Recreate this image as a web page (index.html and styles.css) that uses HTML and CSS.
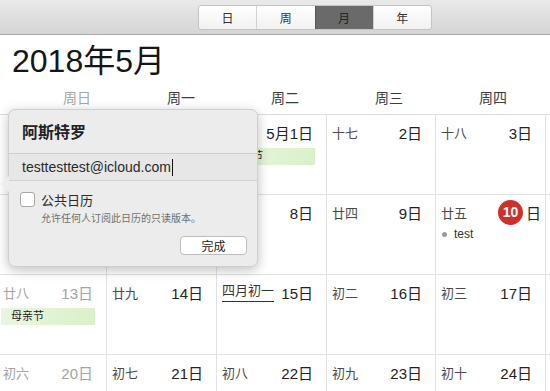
FILE: index.html
```html
<!DOCTYPE html>
<html lang="zh-CN">
<head>
    <meta charset="UTF-8">
    <title>日历</title>
    <link rel="stylesheet" href="styles.css">
</head>
<body>
    <div class="app">
        <div class="toolbar">
            <div class="segmented">
                <span class="seg">日</span>
                <span class="seg">周</span>
                <span class="seg active">月</span>
                <span class="seg">年</span>
            </div>
        </div>

        <h1 class="title">2018年5月</h1>

        <div class="weekdays">
            <span class="weekend">周日</span>
            <span>周一</span>
            <span>周二</span>
            <span>周三</span>
            <span>周四</span>
        </div>

        <div class="month">
            <!-- week 1 (first two days sit under the popover) -->
            <div class="cell weekend"></div>
            <div class="cell"></div>
            <div class="cell"><div class="head"><span class="lunar"></span><span class="date">5月1日</span></div><div class="event-bar">劳动节</div></div>
            <div class="cell"><div class="head"><span class="lunar">十七</span><span class="date">2日</span></div></div>
            <div class="cell"><div class="head"><span class="lunar">十八</span><span class="date">3日</span></div></div>
            <div class="cell"></div>

            <!-- week 2 -->
            <div class="cell weekend"></div>
            <div class="cell"></div>
            <div class="cell"><div class="head"><span class="lunar"></span><span class="date">8日</span></div></div>
            <div class="cell"><div class="head"><span class="lunar">廿四</span><span class="date">9日</span></div></div>
            <div class="cell">
                <div class="head"><span class="lunar">廿五</span><span class="date today"><b>10</b>日</span></div>
                <div class="event"><i class="dot"></i>test</div>
            </div>
            <div class="cell"></div>

            <!-- week 3 -->
            <div class="cell weekend"><div class="head"><span class="lunar">廿八</span><span class="date">13日</span></div><div class="event-bar">母亲节</div></div>
            <div class="cell"><div class="head"><span class="lunar">廿九</span><span class="date">14日</span></div></div>
            <div class="cell"><div class="head"><span class="lunar month-start">四月初一</span><span class="date">15日</span></div></div>
            <div class="cell"><div class="head"><span class="lunar">初二</span><span class="date">16日</span></div></div>
            <div class="cell"><div class="head"><span class="lunar">初三</span><span class="date">17日</span></div></div>
            <div class="cell"></div>

            <!-- week 4 -->
            <div class="cell weekend"><div class="head"><span class="lunar">初六</span><span class="date">20日</span></div></div>
            <div class="cell"><div class="head"><span class="lunar">初七</span><span class="date">21日</span></div></div>
            <div class="cell"><div class="head"><span class="lunar">初八</span><span class="date">22日</span></div></div>
            <div class="cell"><div class="head"><span class="lunar">初九</span><span class="date">23日</span></div></div>
            <div class="cell"><div class="head"><span class="lunar">初十</span><span class="date">24日</span></div></div>
            <div class="cell"></div>
        </div>

        <div class="popover">
            <div class="pop-title">阿斯特罗</div>
            <div class="pop-email">testtesttest@icloud.com<span class="caret"></span></div>
            <div class="pop-body">
                <label class="check-row">
                    <span class="checkbox"></span>
                    <span>公共日历</span>
                </label>
                <div class="hint">允许任何人订阅此日历的只读版本。</div>
                <div class="actions">
                    <button class="btn">完成</button>
                </div>
            </div>
        </div>
    </div>
</body>
</html>
```

FILE: styles.css
```css
body {
    margin: 0;
    font-family: "Liberation Sans", "Noto Sans CJK SC", sans-serif;
    color: #222;
    background-color: #fff;
}

.app {
    position: relative;
    width: 550px;
    height: 391px;
    overflow: hidden;
}

/* toolbar */
.toolbar {
    height: 35px;
    box-sizing: border-box;
    padding: 5px 0 0 198px;
    background: linear-gradient(#e9e9e9, #d4d4d4);
    border-bottom: 1px solid #a9a9a9;
}

.segmented {
    display: flex;
    width: 234px;
    height: 25px;
    border: 1px solid #c4c4c4;
    border-radius: 3px;
    box-sizing: border-box;
    overflow: hidden;
    background: linear-gradient(#ffffff, #f1f1f1);
}

.seg {
    flex: 1;
    display: flex;
    align-items: center;
    justify-content: center;
    font-size: 12px;
    color: #333;
    border-left: 1px solid #d2d2d2;
}

.seg:first-child {
    border-left: none;
}

.seg.active {
    background-color: #6a6a6a;
    color: #262626;
    border-left-color: #555;
}

/* heading */
.title {
    margin: 0;
    height: 48px;
    padding: 8px 0 0 12px;
    box-sizing: border-box;
    font-size: 32px;
    font-weight: normal;
    line-height: 36px;
    color: #151515;
}

.weekdays {
    display: grid;
    grid-template-columns: repeat(5, 104px);
    height: 31px;
    padding-left: 25px;
    box-sizing: border-box;
    padding-bottom: 3px;
    align-items: center;
    font-size: 14px;
    color: #3c3c3c;
    text-align: center;
}

.weekdays .weekend {
    color: #a6a6a6;
}

/* month grid */
.month {
    display: grid;
    grid-template-columns: 109px 110px 110px 109px 110px 1fr;
    grid-auto-rows: 80px;
    margin-left: -2px;
    border-top: 1px solid #dedede;
}

.cell {
    border-right: 1px solid #e2e2e2;
    border-bottom: 1px solid #e2e2e2;
    padding: 7px 13px 0 5px;
    box-sizing: border-box;
}

.head {
    display: flex;
    justify-content: space-between;
    align-items: center;
    height: 20px;
}

.lunar {
    font-size: 13px;
    color: #4a4a4a;
}

.date {
    font-size: 15px;
    color: #222;
}

.weekend .lunar,
.weekend .date {
    color: #a3a3a3;
}

.month-start {
    color: #333;
    border-bottom: 1px solid #333;
    line-height: 16px;
    padding-bottom: 2px;
}

.today {
    display: flex;
    align-items: center;
    margin-right: -9px;
}

.today b {
    width: 25px;
    height: 25px;
    border-radius: 50%;
    background-color: #cc3029;
    color: #fff;
    font-size: 14px;
    display: flex;
    align-items: center;
    justify-content: center;
    margin-right: 3px;
}

.event-bar {
    margin: 6px -2px 0 -2px;
    height: 17px;
    padding-left: 10px;
    font-size: 11px;
    line-height: 17px;
    color: #222;
    background: linear-gradient(to right, #eaf6e0, #d9f1c8);
}

.event {
    display: flex;
    align-items: center;
    margin-top: 5px;
    font-size: 12px;
    color: #333;
}

.dot {
    width: 5px;
    height: 5px;
    border-radius: 50%;
    background-color: #9a9a9a;
    margin: 0 7px 0 1px;
}

/* popover */
.popover {
    position: absolute;
    left: 8px;
    top: 109px;
    width: 250px;
    height: 158px;
    box-sizing: border-box;
    background-color: #ececec;
    border: 1px solid #cfcfcf;
    border-radius: 7px;
    box-shadow: 0 3px 12px rgba(0, 0, 0, 0.25);
}

.popover::before {
    content: "";
    position: absolute;
    left: -8px;
    top: 66px;
    border-top: 8px solid transparent;
    border-bottom: 8px solid transparent;
    border-right: 8px solid #ececec;
}

.pop-title {
    height: 43px;
    padding-left: 13px;
    font-size: 16px;
    font-weight: bold;
    line-height: 46px;
    color: #222;
    border-bottom: 1px solid #cdcdcd;
}

.pop-email {
    height: 26px;
    padding-left: 13px;
    font-size: 14px;
    line-height: 27px;
    color: #2a2a2a;
    background-color: #e7e7e7;
    border-bottom: 1px solid #d2d2d2;
    display: flex;
    align-items: center;
}

.caret {
    width: 1px;
    height: 17px;
    background-color: #111;
    margin-left: 1px;
}

.pop-body {
    padding: 9px 10px 0 11px;
}

.check-row {
    display: flex;
    align-items: center;
    font-size: 13px;
    color: #2a2a2a;
}

.checkbox {
    width: 13px;
    height: 13px;
    border: 1px solid #a9a9a9;
    border-radius: 3px;
    background-color: #fff;
    margin-right: 6px;
}

.hint {
    margin: 1px 0 0 21px;
    font-size: 10px;
    color: #6f6f6f;
}

.actions {
    display: flex;
    justify-content: flex-end;
    margin-top: 11px;
}

.btn {
    width: 67px;
    height: 19px;
    padding: 0;
    border: 1px solid #bdbdbd;
    border-radius: 4px;
    background-color: #fff;
    font-family: inherit;
    font-size: 12px;
    color: #222;
}
```
